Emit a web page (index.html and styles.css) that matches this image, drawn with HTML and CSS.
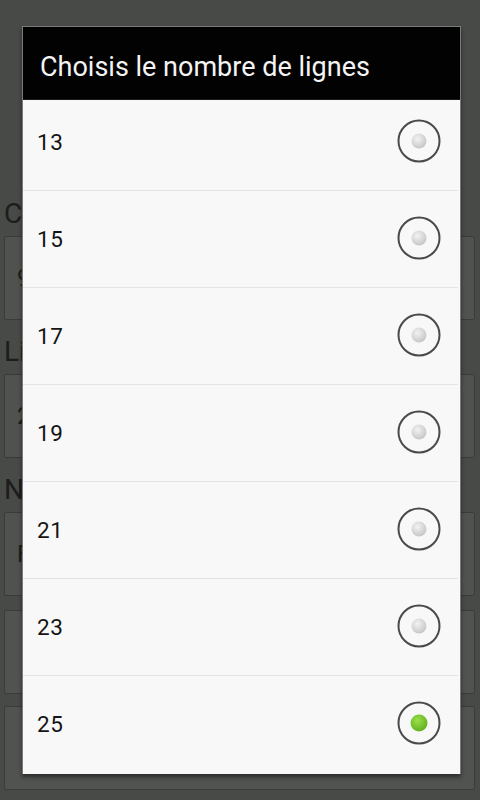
FILE: index.html
```html
<!DOCTYPE html>
<html lang="fr">
<head>
<meta charset="utf-8">
<title>Choisis le nombre de lignes</title>
<link rel="stylesheet" href="styles.css">
</head>
<body>
<div class="app">
  <div class="app-top"></div>
  <div class="label">Colonnes</div>
  <div class="field">9</div>
  <div class="label">Lignes</div>
  <div class="field">25</div>
  <div class="label">Nombre</div>
  <div class="field">Facile</div>
  <div class="field btn"></div>
  <div class="field btn"></div>
</div>

<div class="dialog">
  <div class="dialog-title">Choisis le nombre de lignes</div>
  <div class="list">
    <div class="list-inner">
      <div class="row"><span class="num">13</span><svg class="radio" viewBox="0 0 46 46"><defs><radialGradient id="g" cx="0.4" cy="0.35" r="0.7"><stop offset="0" stop-color="#f2f2f2"/><stop offset="1" stop-color="#c4c4c4"/></radialGradient></defs><circle cx="23" cy="23" r="20.5" fill="none" stroke="#4a4a4a" stroke-width="2"/><circle cx="23" cy="23" r="7.5" fill="url(#g)"/></svg></div>
      <div class="row"><span class="num">15</span><svg class="radio" viewBox="0 0 46 46"><circle cx="23" cy="23" r="20.5" fill="none" stroke="#4a4a4a" stroke-width="2"/><circle cx="23" cy="23" r="7.5" fill="url(#g)"/></svg></div>
      <div class="row"><span class="num">17</span><svg class="radio" viewBox="0 0 46 46"><circle cx="23" cy="23" r="20.5" fill="none" stroke="#4a4a4a" stroke-width="2"/><circle cx="23" cy="23" r="7.5" fill="url(#g)"/></svg></div>
      <div class="row"><span class="num">19</span><svg class="radio" viewBox="0 0 46 46"><circle cx="23" cy="23" r="20.5" fill="none" stroke="#4a4a4a" stroke-width="2"/><circle cx="23" cy="23" r="7.5" fill="url(#g)"/></svg></div>
      <div class="row"><span class="num">21</span><svg class="radio" viewBox="0 0 46 46"><circle cx="23" cy="23" r="20.5" fill="none" stroke="#4a4a4a" stroke-width="2"/><circle cx="23" cy="23" r="7.5" fill="url(#g)"/></svg></div>
      <div class="row"><span class="num">23</span><svg class="radio" viewBox="0 0 46 46"><circle cx="23" cy="23" r="20.5" fill="none" stroke="#4a4a4a" stroke-width="2"/><circle cx="23" cy="23" r="7.5" fill="url(#g)"/></svg></div>
      <div class="row last"><span class="num">25</span><svg class="radio" viewBox="0 0 46 46"><defs><radialGradient id="gg" cx="0.4" cy="0.35" r="0.7"><stop offset="0" stop-color="#9be04a"/><stop offset="1" stop-color="#5fae1c"/></radialGradient></defs><circle cx="23" cy="23" r="20.5" fill="none" stroke="#4a4a4a" stroke-width="2"/><circle cx="23" cy="23" r="8.5" fill="url(#gg)"/></svg></div>
    </div>
  </div>
</div>
</body>
</html>
```

FILE: styles.css
```css
html, body {
  margin: 0;
  padding: 0;
}
body {
  width: 480px;
  height: 800px;
  overflow: hidden;
  background: #474a46;
  font-family: Roboto, "Noto Sans", sans-serif;
  position: relative;
}
.app {
  display: flex;
  flex-direction: column;
  padding: 0 5px 0 4px;
}
.app-top {
  height: 196px;
}
.label {
  font-size: 28px;
  color: #1c1d1b;
  height: 40px;
  line-height: 36px;
}
.field {
  height: 82px;
  border: 1px solid #3a3c39;
  border-radius: 2px;
  background: #4f524e;
  margin-bottom: 14px;
  color: #1c1d1b;
  font-size: 24px;
  line-height: 82px;
  padding-left: 12px;
}
.field.btn {
  margin-bottom: 12px;
  background: #50534f;
}
.dialog {
  position: absolute;
  left: 22px;
  top: 26px;
  width: 437px;
  border: 1px solid #7a7c79;
  border-bottom: none;
  box-shadow: 0 3px 4px rgba(0,0,0,0.45);
  background: #000;
}
.dialog-title {
  height: 73px;
  background: #020202;
  color: #f4f4f4;
  font-size: 27px;
  line-height: 80px;
  padding-left: 17px;
  box-sizing: border-box;
  border-bottom: 1px solid #1a1a1a;
  white-space: nowrap;
  overflow: hidden;
}
.list {
  height: 674px;
  overflow: hidden;
  background: #f8f8f8;
}
.list-inner {
  margin-top: -6px;
}
.row {
  height: 96px;
  border-bottom: 1px solid #e4e4e4;
  display: flex;
  align-items: center;
  justify-content: space-between;
  padding: 0 16px 0 14px;
  margin: 0 2px 0 0;
}
.row.last {
  border-bottom: none;
}
.num {
  font-size: 22.5px;
  letter-spacing: 0.6px;
  color: #141414;
  padding-top: 0;
}
.radio {
  width: 46px;
  height: 46px;
  margin-top: -3px;
}
```
